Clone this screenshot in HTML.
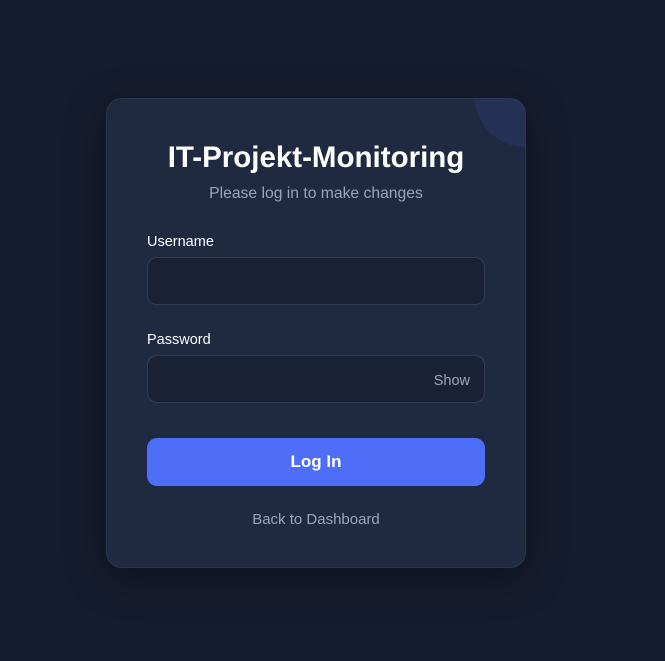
<!DOCTYPE html>
<html><head><style>
*{box-sizing:border-box;margin:0;padding:0}
body{width:665px;height:661px;background:#161c2f;font-family:"Liberation Sans",sans-serif;position:relative;overflow:hidden}
.card{position:absolute;left:106px;top:98px;width:420px;height:470px;background:#1f2940;border:1px solid #2c3650;border-radius:16px;overflow:hidden;box-shadow:0 10px 40px rgba(0,0,0,.35)}
.circ{position:absolute;left:368px;top:-52px;width:100px;height:100px;border-radius:50%;background:#243155}
h1{position:absolute;top:42px;left:0;width:100%;text-align:center;color:#fff;font-size:29.5px;font-weight:bold}
.sub{position:absolute;top:86px;width:100%;text-align:center;color:#9aa5bd;font-size:15.7px}
label{position:absolute;left:40px;color:#fff;font-size:14.5px}
.in{position:absolute;left:40px;width:338px;height:48px;background:#1b2134;border:1px solid #323c55;border-radius:10px}
.show{position:absolute;right:14px;top:17px;color:#9aa5bd;font-size:14.5px}
.btn{position:absolute;left:40px;top:339px;width:338px;height:48px;background:#4f6ef7;border-radius:10px;color:#fff;font-weight:bold;font-size:17px;text-align:center;line-height:48px}
.back{position:absolute;top:412px;width:100%;text-align:center;color:#9aa5bd;font-size:15px}
</style></head><body>
<div class="card"><div class="circ"></div>
<h1>IT-Projekt-Monitoring</h1>
<div class="sub">Please log in to make changes</div>
<label style="top:135px">Username</label>
<div class="in" style="top:158px"></div>
<label style="top:233px">Password</label>
<div class="in" style="top:256px"><span class="show">Show</span></div>
<div class="btn">Log In</div>
<div class="back">Back to Dashboard</div>
</div>
</body></html>
